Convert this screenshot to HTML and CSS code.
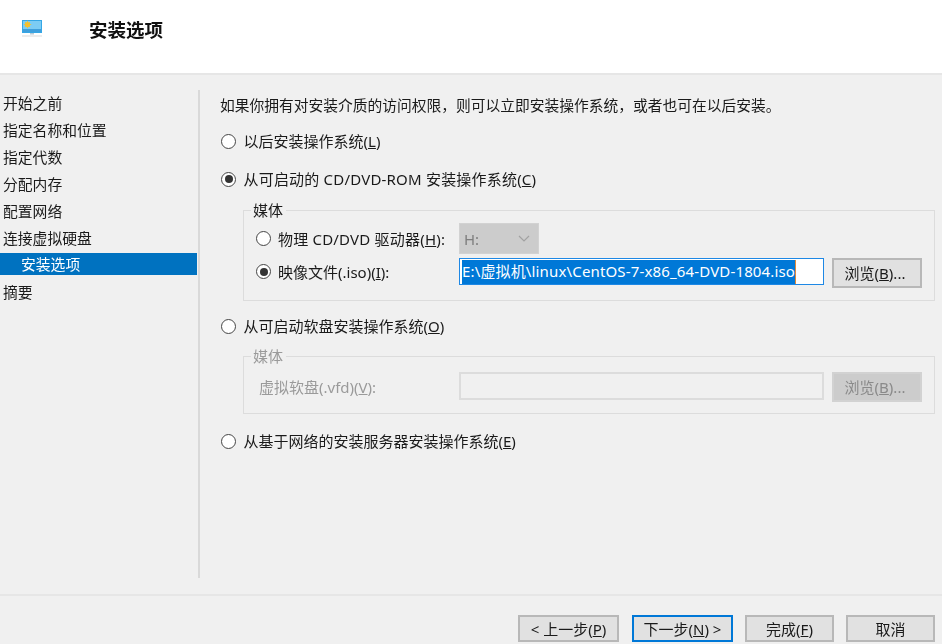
FILE: index.html
```html
<!DOCTYPE html>
<html lang="zh-CN">
<head>
<meta charset="utf-8">
<title>安装选项</title>
<link rel="stylesheet" href="styles.css">
</head>
<body>
<div class="window">
  <header class="header">
    <svg class="logo" width="22" height="20" viewBox="0 0 22 20">
      <rect x="1" y="0" width="20" height="13" fill="#35a7e6"/>
      <rect x="2" y="1" width="18" height="11" fill="#7cccf4"/>
      <rect x="2" y="9" width="18" height="3" fill="#3f9fdc"/>
      <circle cx="6.5" cy="4.5" r="2.6" fill="#f6c02c"/>
      <path d="M6.5 0.8V8.2M2.8 4.5H10.2M4 2L9 7M9 2L4 7" stroke="#f6c02c" stroke-width="0.8"/>
      <rect x="9" y="13" width="4" height="1.5" fill="#b9c9d4"/>
      <rect x="1" y="15" width="20" height="2" fill="#ececec"/>
    </svg>
    <h1 class="title">安装选项</h1>
  </header>
  <main class="main">
    <nav class="nav">
      <div class="nav-item">开始之前</div>
      <div class="nav-item">指定名称和位置</div>
      <div class="nav-item">指定代数</div>
      <div class="nav-item">分配内存</div>
      <div class="nav-item">配置网络</div>
      <div class="nav-item">连接虚拟硬盘</div>
      <div class="nav-item nav-active">安装选项</div>
      <div class="nav-item">摘要</div>
    </nav>
    <section class="content">
      <p class="intro">如果你拥有对安装介质的访问权限，则可以立即安装操作系统，或者也可在以后安装。</p>
      <div class="radio-row r1"><span class="radio"></span><span>以后安装操作系统(<u>L</u>)</span></div>
      <div class="radio-row r2"><span class="radio on"></span><span class="wide-text">从可启动的 CD/DVD-ROM 安装操作系统(<u>C</u>)</span></div>
      <fieldset class="group g1">
        <legend class="legend">媒体</legend>
        <div class="row row-drive">
          <div class="radio-row inner"><span class="radio"></span><span class="wide-text">物理 CD/DVD 驱动器(<u>H</u>):</span></div>
          <div class="select"><span>H:</span>
            <svg width="12" height="7" viewBox="0 0 12 7"><path d="M1 1L6 6L11 1" fill="none" stroke="#a2a2a2" stroke-width="1.2"/></svg>
          </div>
        </div>
        <div class="row row-iso">
          <div class="radio-row inner"><span class="radio on"></span><span>映像文件(.iso)(<u>I</u>):</span></div>
          <div class="input"><span class="selected">E:\虚拟机\linux\CentOS-7-x86_64-DVD-1804.iso</span></div>
          <div class="btn browse">浏览(<u>B</u>)...</div>
        </div>
      </fieldset>
      <div class="radio-row r3"><span class="radio"></span><span>从可启动软盘安装操作系统(<u>O</u>)</span></div>
      <fieldset class="group g2">
        <legend class="legend">媒体</legend>
        <div class="row row-vfd">
          <div class="vfd-label">虚拟软盘(.vfd)(<u>V</u>):</div>
          <div class="input input-off"></div>
          <div class="btn browse btn-off">浏览(<u>B</u>)...</div>
        </div>
      </fieldset>
      <div class="radio-row r4"><span class="radio"></span><span>从基于网络的安装服务器安装操作系统(<u>E</u>)</span></div>
    </section>
  </main>
  <footer class="footer">
    <div class="btn wide first">&lt; 上一步(<u>P</u>)</div>
    <div class="btn wide primary">下一步(<u>N</u>) &gt;</div>
    <div class="btn narrow">完成(<u>F</u>)</div>
    <div class="btn narrow">取消</div>
  </footer>
</div>
</body>
</html>
```
FILE: styles.css
```css
* { box-sizing: border-box; }
html, body { margin: 0; padding: 0; }
body {
  width: 942px;
  height: 644px;
  overflow: hidden;
  background: #f0f0f0;
  color: #1a1a1a;
  font-family: "Noto Sans", "Noto Sans CJK SC", sans-serif;
  font-size: 15px;
  line-height: 20px;
}
.window { width: 942px; height: 644px; overflow: hidden; display: flex; flex-direction: column; filter: blur(0.45px); }
.header {
  height: 75px;
  flex: none;
  background: #fff;
  border-bottom: 2px solid #e6e6e6;
  display: flex;
  align-items: flex-start;
  padding: 20px 0 0 21px;
}
.logo { flex: none; }
.title {
  margin: -1px 0 0 46px;
  font-size: 18.5px;
  font-weight: 700;
  line-height: 22px;
  color: #111;
}
.main { flex: none; height: 519px; display: flex; padding-top: 15px; }
.nav { width: 200px; flex: none; height: 488px; border-right: 2px solid #d9d9d9; }
.nav-item { height: 27px; line-height: 27px; padding-left: 3px; font-size: 14.8px; }
.nav-active {
  height: 22px;
  line-height: 22px;
  margin: 1px 1px 4px 0;
  padding-left: 21px;
  background: #0072c0;
  color: #fff;
}
.content { flex: 1; padding: 5px 7px 0 20px; min-width: 0; }
.intro { margin: 0; height: 20px; font-size: 14.75px; white-space: nowrap; }
.radio-row { display: flex; align-items: center; height: 20px; margin-left: 1px; gap: 7.5px; white-space: nowrap; }
.radio {
  width: 15px;
  height: 15px;
  flex: none;
  border: 1.5px solid #444;
  border-radius: 50%;
  background: #fff;
  display: flex;
  align-items: center;
  justify-content: center;
}
.radio.on::after { content: ""; width: 8px; height: 8px; border-radius: 50%; background: #333; }
.r1 { margin-top: 16px; }
.r2 { margin-top: 18px; }
.wide-text { letter-spacing: 0.2px; }
.group { margin: 12px 0 0 23px; padding: 0 0 0 11px; border: 1px solid #dcdcdc; min-width: 0; }
.legend { padding: 0 3px 0 2px; margin-left: -4px; line-height: 18px; font-size: 15px; }
.g1 { height: 100px; }
.g2 { height: 67px; margin-top: 11px; color: #9a9a9a; }
.row { display: flex; align-items: flex-start; }
.row-drive { height: 39px; padding-top: 6px; }
.row-iso { height: 34px; }
.inner { width: 203px; margin-left: 1px; height: 27px; gap: 7px; }
.select {
  width: 80px;
  height: 31px;
  margin-top: -2px;
  background: #cccccc;
  border: 1px solid #d2d2d2;
  color: #7e7e7e;
  padding: 0 8px 0 4px;
  display: flex;
  align-items: center;
  justify-content: space-between;
}
.input {
  width: 365px;
  height: 27px;
  background: #fff;
  border: 1px solid #1e88e5;
  padding: 1px 0 0 2px;
  flex: none;
  line-height: 22px;
  white-space: nowrap;
  overflow: hidden;
}
.selected { display: inline-block; background: #0078d7; color: #fff; height: 24px; border-right: 1px solid #e08a3a; letter-spacing: 0.15px; }
.btn {
  height: 27px;
  background: #e1e1e1;
  border: 2px solid #b8b8b8;
  display: flex;
  align-items: center;
  justify-content: center;
  white-space: nowrap;
  flex: none;
  line-height: 20px;
}
.browse { width: 90px; height: 30px; margin-left: 8px; padding-right: 4px; }
.row-vfd { padding-top: 7px; }
.vfd-label { width: 204px; padding: 5px 0 0 4px; color: #9a9a9a; }
.input-off { border: 2px solid #dcdcdc; background: #f0f0f0; height: 28px; }
.btn-off { background: #cccccc; border-color: #d2d2d2; color: #8a8a8a; }
.r3 { margin-top: 15px; }
.r4 { margin-top: 17px; }
.footer {
  flex: none;
  height: 50px;
  border-top: 2px solid #e6e6e6;
  display: flex;
  justify-content: flex-end;
  align-items: flex-start;
  padding: 19px 7px 0 0;
  gap: 12px;
}
.wide { width: 101px; }
.first { margin-right: 1px; }
.narrow { width: 89px; }
.primary { border-color: #0078d7; }
```
